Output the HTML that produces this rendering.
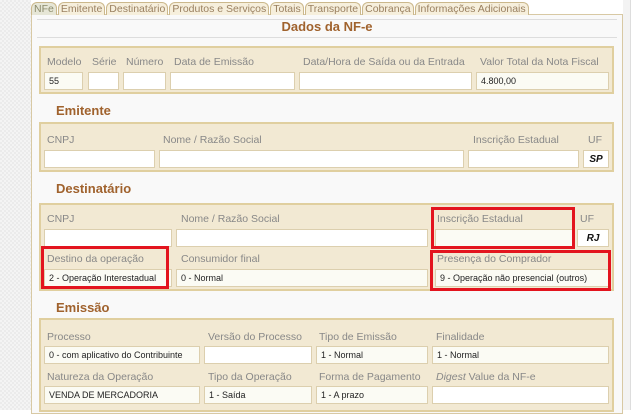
<!DOCTYPE html>
<html><head><meta charset="utf-8"><style>
*{margin:0;padding:0;box-sizing:border-box}
body{width:640px;height:410px;overflow:hidden;position:relative;font-family:"Liberation Sans",sans-serif;background:#fff}
.bgl{position:absolute;left:0;top:0;width:31px;height:410px;background-color:#f4f4f4;background-image:linear-gradient(45deg,#ebebeb 25%,transparent 25%,transparent 75%,#ebebeb 75%),linear-gradient(45deg,#ebebeb 25%,transparent 25%,transparent 75%,#ebebeb 75%);background-size:4px 4px;background-position:0 0,2px 2px}
.bgr{position:absolute;left:623px;top:0;width:17px;height:410px;background:#f3f3f3}
.bgr2{position:absolute;left:630px;top:0;width:10px;height:410px;background:#fff;border-left:1px solid #ddd}
.panel{position:absolute;left:31px;top:14px;width:592px;height:400px;background:#f9f9f9;border:1px solid #d8c9a4}
.tabs{position:absolute;left:31px;top:2px;font-size:10.5px;color:#9a8060;white-space:nowrap}
.tab{display:inline-block;border:1px solid #cbb88c;border-bottom:none;border-radius:6px 6px 0 0;padding:0 2px;height:13px;line-height:12px;background:#f6efdc;margin-right:1px}
.tab.a{background:#e6e6d6;color:#8a8a6a}
.hl{position:absolute;left:37px;width:580px;height:1px;background:#ddd}
.title{position:absolute;left:31px;width:592px;top:19px;text-align:center;font-weight:bold;font-size:13px;color:#a0622d}
.sec{position:absolute;left:56px;font-weight:bold;font-size:13px;color:#a0622d}
.box{position:absolute;background:#f2e9d3;border:2px solid #e0cf9f}
.l{position:absolute;font-size:10.5px;color:#888;white-space:nowrap}
.i{position:absolute;height:18px;background:#fff;border:1px solid #dccfae;font-size:9px;color:#222;padding:3px 0 0 4px;white-space:nowrap;overflow:hidden}
.i.s{background:#fbfbf4}
.red{position:absolute;border:3px solid #e3141e}
.uf{font-weight:bold;font-style:italic;font-size:10px;color:#111;text-align:center;padding-left:0}
</style></head><body>
<div class="bgl"></div><div class="bgr"></div><div class="bgr2"></div>
<div class="panel"></div>
<div class="tabs"><span class="tab a">NFe</span><span class="tab">Emitente</span><span class="tab">Destinatário</span><span class="tab">Produtos e Serviços</span><span class="tab">Totais</span><span class="tab">Transporte</span><span class="tab">Cobrança</span><span class="tab">Informações Adicionais</span></div>
<div class="hl" style="top:19px"></div>
<div class="title">Dados da NF-e</div>
<div class="hl" style="top:37px"></div>

<div class="box" style="left:39px;top:46px;width:575px;height:48px"></div>
<div class="l" style="left:47px;top:56px">Modelo</div>
<div class="l" style="left:92px;top:56px">Série</div>
<div class="l" style="left:126px;top:56px">Número</div>
<div class="l" style="left:174px;top:56px">Data de Emissão</div>
<div class="l" style="left:303px;top:56px">Data/Hora de Saída ou da Entrada</div>
<div class="l" style="left:480px;top:56px">Valor Total da Nota Fiscal</div>
<div class="i s" style="left:44px;top:72px;width:39px">55</div>
<div class="i" style="left:88px;top:72px;width:31px"></div>
<div class="i" style="left:123px;top:72px;width:43px"></div>
<div class="i" style="left:170px;top:72px;width:125px"></div>
<div class="i" style="left:299px;top:72px;width:173px"></div>
<div class="i s" style="left:476px;top:72px;width:133px">4.800,00</div>

<div class="sec" style="top:103px">Emitente</div>
<div class="box" style="left:39px;top:122px;width:575px;height:50px"></div>
<div class="l" style="left:47px;top:134px">CNPJ</div>
<div class="l" style="left:163px;top:134px">Nome / Razão Social</div>
<div class="l" style="left:473px;top:134px">Inscrição Estadual</div>
<div class="l" style="left:588px;top:134px">UF</div>
<div class="i" style="left:44px;top:150px;width:111px"></div>
<div class="i" style="left:159px;top:150px;width:305px"></div>
<div class="i" style="left:468px;top:150px;width:111px"></div>
<div class="i uf" style="left:583px;top:150px;width:26px">SP</div>

<div class="sec" style="top:181px">Destinatário</div>
<div class="box" style="left:39px;top:203px;width:575px;height:88px"></div>
<div class="l" style="left:47px;top:213px">CNPJ</div>
<div class="l" style="left:181px;top:213px">Nome / Razão Social</div>
<div class="l" style="left:437px;top:213px">Inscrição Estadual</div>
<div class="l" style="left:580px;top:213px">UF</div>
<div class="i" style="left:44px;top:229px;width:128px"></div>
<div class="i" style="left:176px;top:229px;width:252px"></div>
<div class="i s" style="left:435px;top:229px;width:138px"></div>
<div class="i uf" style="left:577px;top:229px;width:32px">RJ</div>
<div class="l" style="left:47px;top:253px">Destino da operação</div>
<div class="l" style="left:181px;top:253px">Consumidor final</div>
<div class="l" style="left:437px;top:253px">Presença do Comprador</div>
<div class="i s" style="left:44px;top:269px;width:128px">2 - Operação Interestadual</div>
<div class="i s" style="left:176px;top:269px;width:252px">0 - Normal</div>
<div class="i s" style="left:435px;top:269px;width:174px">9 - Operação não presencial (outros)</div>
<div class="red" style="left:41px;top:246px;width:128px;height:43px"></div>
<div class="red" style="left:431px;top:207px;width:144px;height:42px"></div>
<div class="red" style="left:430px;top:250px;width:181px;height:41px"></div>

<div class="sec" style="top:300px">Emissão</div>
<div class="box" style="left:39px;top:318px;width:575px;height:94px"></div>
<div class="l" style="left:47px;top:331px">Processo</div>
<div class="l" style="left:208px;top:331px">Versão do Processo</div>
<div class="l" style="left:319px;top:331px">Tipo de Emissão</div>
<div class="l" style="left:436px;top:331px">Finalidade</div>
<div class="i s" style="left:44px;top:346px;width:156px">0 - com aplicativo do Contribuinte</div>
<div class="i" style="left:204px;top:346px;width:108px"></div>
<div class="i s" style="left:316px;top:346px;width:112px">1 - Normal</div>
<div class="i s" style="left:432px;top:346px;width:177px">1 - Normal</div>
<div class="l" style="left:47px;top:371px">Natureza da Operação</div>
<div class="l" style="left:208px;top:371px">Tipo da Operação</div>
<div class="l" style="left:319px;top:371px">Forma de Pagamento</div>
<div class="l" style="left:436px;top:371px"><i>Digest</i> Value da NF-e</div>
<div class="i s" style="left:44px;top:386px;width:156px">VENDA DE MERCADORIA</div>
<div class="i s" style="left:204px;top:386px;width:108px">1 - Saída</div>
<div class="i s" style="left:316px;top:386px;width:112px">1 - A prazo</div>
<div class="i" style="left:432px;top:386px;width:177px"></div>
</body></html>
